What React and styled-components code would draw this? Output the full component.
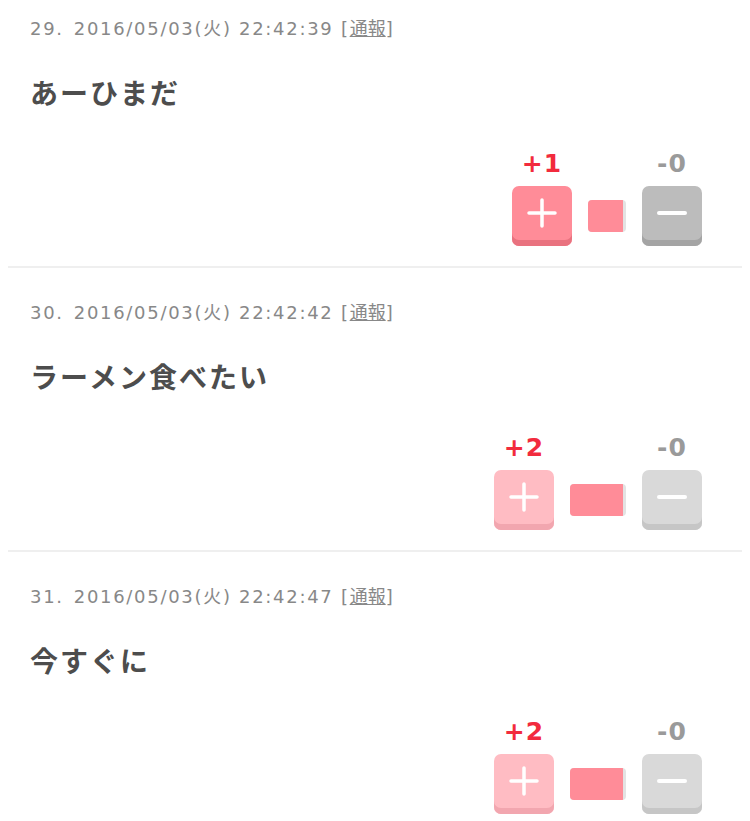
import React from 'react';
import styled, { createGlobalStyle } from 'styled-components';

const GlobalStyle = createGlobalStyle`
  html, body {
    margin: 0;
    padding: 0;
    background: #fff;
  }
  body {
    font-family: 'DejaVu Sans', 'Noto Sans CJK JP', sans-serif;
  }
`;

const List = styled.ul`
  list-style: none;
  margin: 0;
  padding: 0 8px;
`;

const Item = styled.li`
  padding: 30px 40px 20px 22px;
  border-bottom: 2px solid #efefef;
  &:first-child {
    padding-top: 14px;
  }
`;

const Meta = styled.div`
  height: 26px;
  line-height: 26px;
  font-size: 18px;
  letter-spacing: 1.7px;
  color: #888;
  white-space: nowrap;
`;

const Num = styled.span`
  margin-right: 10px;
`;

const Report = styled.a`
  color: #888;
  text-decoration: underline;
  font-family: 'Noto Sans CJK JP', sans-serif;
  letter-spacing: 0;
`;

const Body = styled.p`
  margin: 32px 0 0;
  height: 40px;
  line-height: 40px;
  font-family: 'Noto Sans CJK JP', sans-serif;
  font-weight: bold;
  font-size: 28px;
  letter-spacing: 2px;
  color: #4d4d4d;
`;

const VoteRow = styled.div`
  margin-top: 37px;
  display: flex;
  justify-content: flex-end;
  align-items: flex-end;
  gap: 16px;
`;

const VoteCol = styled.div`
  display: flex;
  flex-direction: column;
  align-items: center;
  gap: 7px;
`;

const Score = styled.span`
  height: 30px;
  line-height: 30px;
  font-family: 'DejaVu Sans', sans-serif;
  font-weight: bold;
  font-size: 25px;
  letter-spacing: 1px;
  color: ${(p) => (p.$kind === 'plus' ? '#f22b3d' : '#9a9a9a')};
`;

const palette = {
  plus: { face: '#ff8c98', edge: '#e9727f' },
  plusDone: { face: '#ffbcc3', edge: '#f2a6af' },
  minus: { face: '#bcbcbc', edge: '#a4a4a4' },
  minusDone: { face: '#d9d9d9', edge: '#c6c6c6' },
};

const VoteButton = styled.button`
  width: 60px;
  height: 60px;
  padding: 0 0 6px;
  border: none;
  border-radius: 7px;
  background: ${(p) => palette[p.$tone].face};
  box-shadow: inset 0 -6px 0 ${(p) => palette[p.$tone].edge};
  display: flex;
  align-items: center;
  justify-content: center;
  cursor: pointer;
`;

const Meter = styled.div`
  height: 32px;
  margin-bottom: 14px;
  border-radius: 4px;
  overflow: hidden;
  background: #e3e3e3;
  display: flex;
`;

const MeterFill = styled.div`
  height: 100%;
  background: #ff8c98;
`;

const PlusIcon = () => (
  <svg width="30" height="30" viewBox="0 0 30 30">
    <path d="M15 2v26M2 15h26" stroke="#fff" strokeWidth="3.5" strokeLinecap="round" />
  </svg>
);

const MinusIcon = () => (
  <svg width="32" height="30" viewBox="0 0 32 30">
    <path d="M3 15h26" stroke="#fff" strokeWidth="4" strokeLinecap="round" />
  </svg>
);

const comments = [
  { no: 29, time: '2016/05/03(火) 22:42:39', text: 'あーひまだ', plus: 1, minus: 0, voted: false, width: 38 },
  { no: 30, time: '2016/05/03(火) 22:42:42', text: 'ラーメン食べたい', plus: 2, minus: 0, voted: true, width: 56 },
  { no: 31, time: '2016/05/03(火) 22:42:47', text: '今すぐに', plus: 2, minus: 0, voted: true, width: 56 },
];

function Comment({ c }) {
  return (
    <Item>
      <Meta>
        <Num>{c.no}.</Num>
        {c.time} [<Report href="#">通報</Report>]
      </Meta>
      <Body>{c.text}</Body>
      <VoteRow>
        <VoteCol>
          <Score $kind="plus">+{c.plus}</Score>
          <VoteButton type="button" $tone={c.voted ? 'plusDone' : 'plus'}>
            <PlusIcon />
          </VoteButton>
        </VoteCol>
        <Meter style={{ width: c.width }}>
          <MeterFill style={{ width: c.width - 3 }} />
        </Meter>
        <VoteCol>
          <Score $kind="minus">-{c.minus}</Score>
          <VoteButton type="button" $tone={c.voted ? 'minusDone' : 'minus'}>
            <MinusIcon />
          </VoteButton>
        </VoteCol>
      </VoteRow>
    </Item>
  );
}

export default function App() {
  return (
    <>
      <GlobalStyle />
      <List>
        {comments.map((c) => (
          <Comment key={c.no} c={c} />
        ))}
      </List>
    </>
  );
}
